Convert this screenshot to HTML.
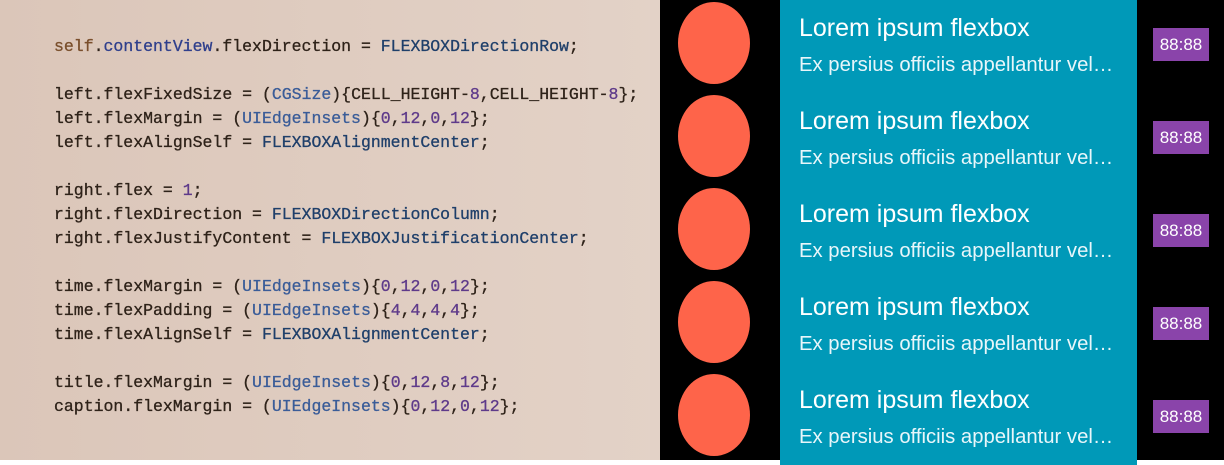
<!DOCTYPE html>
<html><head><style>
body{margin:0;width:1224px;height:460px;overflow:hidden;position:relative;font-family:"Liberation Sans",sans-serif}
#l{position:absolute;left:0;top:0;width:662px;height:460px;background:linear-gradient(90deg,#dbc6b9,#e3d2c7)}
pre{position:absolute;left:54px;top:35px;margin:0;font:16.5px/24px "Liberation Mono",monospace;color:#2e2219;-webkit-text-stroke:0.3px}
.k{color:#7a4f2c}.p{color:#2f3f8c}.t{color:#3a5c98}.c{color:#1f3f6a}.n{color:#5e3a8a}
#r{position:absolute;left:660px;top:0;width:564px;height:460px;background:#000}
.row{position:absolute;left:0;height:93px;width:564px}
.cir{position:absolute;left:18px;top:2px;width:72px;height:82px;border-radius:50%;background:#fe644a}
.box{position:absolute;left:120px;top:0;width:357px;height:93px;background:#0099b8;color:#fff}
.ti{position:absolute;left:19px;top:14px;font-size:25px}
.ca{position:absolute;left:19px;top:54px;font-size:20.3px;color:#e8f6fa}
.tm{position:absolute;left:493px;top:28px;width:56px;height:33px;background:#8a44aa;color:#fff;font-size:17px;line-height:33px;text-align:center}
</style></head><body>
<div id="l"></div>
<pre><span class="k">self</span>.<span class="p">contentView</span>.flexDirection = <span class="c">FLEXBOXDirectionRow</span>;

left.flexFixedSize = (<span class="t">CGSize</span>){CELL_HEIGHT-<span class="n">8</span>,CELL_HEIGHT-<span class="n">8</span>};
left.flexMargin = (<span class="t">UIEdgeInsets</span>){<span class="n">0</span>,<span class="n">12</span>,<span class="n">0</span>,<span class="n">12</span>};
left.flexAlignSelf = <span class="c">FLEXBOXAlignmentCenter</span>;

right.flex = <span class="n">1</span>;
right.flexDirection = <span class="c">FLEXBOXDirectionColumn</span>;
right.flexJustifyContent = <span class="c">FLEXBOXJustificationCenter</span>;

time.flexMargin = (<span class="t">UIEdgeInsets</span>){<span class="n">0</span>,<span class="n">12</span>,<span class="n">0</span>,<span class="n">12</span>};
time.flexPadding = (<span class="t">UIEdgeInsets</span>){<span class="n">4</span>,<span class="n">4</span>,<span class="n">4</span>,<span class="n">4</span>};
time.flexAlignSelf = <span class="c">FLEXBOXAlignmentCenter</span>;

title.flexMargin = (<span class="t">UIEdgeInsets</span>){<span class="n">0</span>,<span class="n">12</span>,<span class="n">8</span>,<span class="n">12</span>};
caption.flexMargin = (<span class="t">UIEdgeInsets</span>){<span class="n">0</span>,<span class="n">12</span>,<span class="n">0</span>,<span class="n">12</span>};</pre>
<div id="r">
<div class="row" style="top:0"><div class="cir"></div><div class="box"><div class="ti">Lorem ipsum flexbox</div><div class="ca">Ex persius officiis appellantur vel…</div></div><div class="tm">88:88</div></div>
<div class="row" style="top:93px"><div class="cir"></div><div class="box"><div class="ti">Lorem ipsum flexbox</div><div class="ca">Ex persius officiis appellantur vel…</div></div><div class="tm">88:88</div></div>
<div class="row" style="top:186px"><div class="cir"></div><div class="box"><div class="ti">Lorem ipsum flexbox</div><div class="ca">Ex persius officiis appellantur vel…</div></div><div class="tm">88:88</div></div>
<div class="row" style="top:279px"><div class="cir"></div><div class="box"><div class="ti">Lorem ipsum flexbox</div><div class="ca">Ex persius officiis appellantur vel…</div></div><div class="tm">88:88</div></div>
<div class="row" style="top:372px"><div class="cir"></div><div class="box"><div class="ti">Lorem ipsum flexbox</div><div class="ca">Ex persius officiis appellantur vel…</div></div><div class="tm">88:88</div></div>
</div>
</body></html>
